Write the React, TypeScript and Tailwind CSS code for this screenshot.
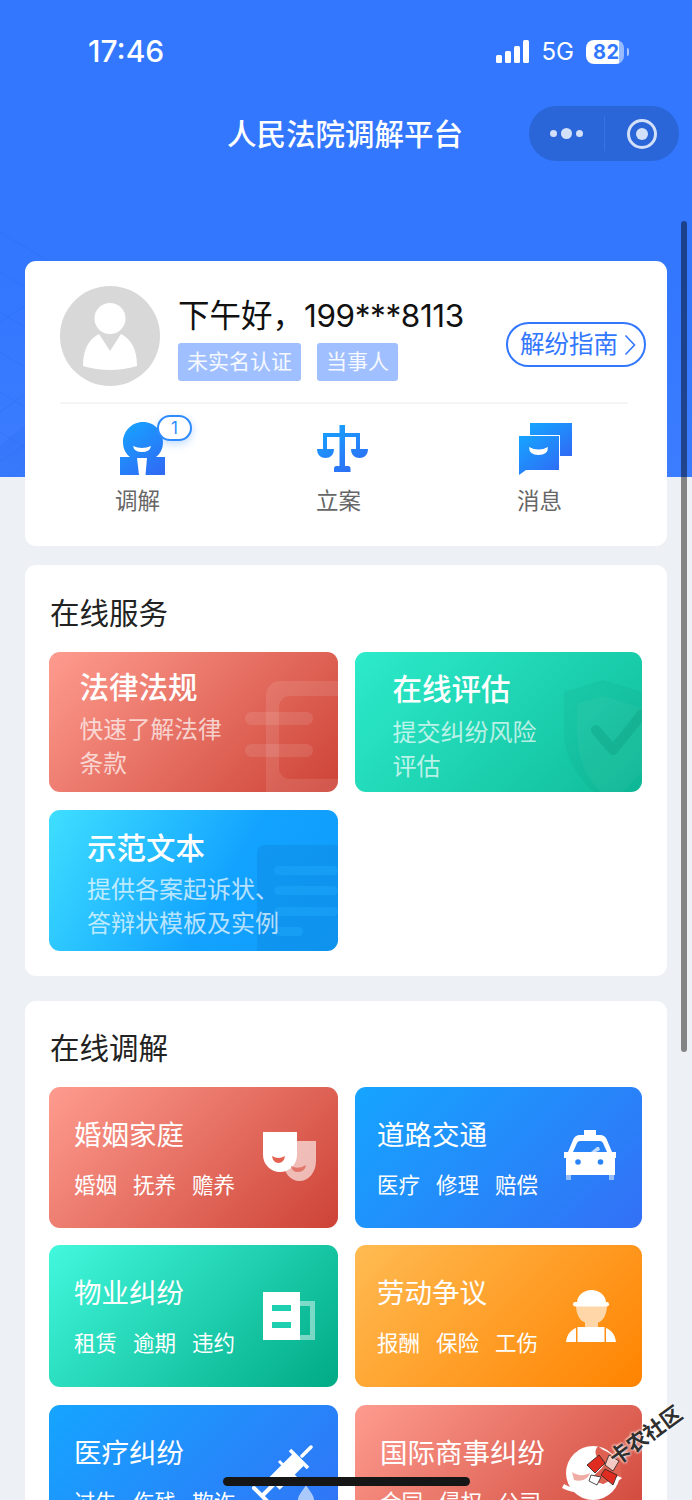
import React from 'react';

function Signal() {
  return (
    <svg width="34" height="24" viewBox="0 0 34 24" fill="#fff">
      <rect x="0" y="15" width="6" height="8" rx="1.5" />
      <rect x="9" y="11" width="6" height="12" rx="1.5" />
      <rect x="18" y="6" width="6" height="17" rx="1.5" />
      <rect x="27" y="0" width="6" height="23" rx="1.5" />
    </svg>
  );
}

function Battery() {
  return (
    <div className="relative ml-[12px] flex h-[24px] w-[43px] items-center">
      <div className="flex h-[24px] w-[43px] overflow-hidden rounded-[8px]">
        <div className="h-full w-[37px] bg-white" />
        <div className="h-full w-[6px] bg-white/50" />
      </div>
      <span className="absolute left-[7px] top-0 text-[20px] font-bold leading-[24px] tracking-[0.5px] text-[#3377ff]">82</span>
      <div className="ml-[3px] h-[8px] w-[2px] rounded-r-[2px] bg-white/60" />
    </div>
  );
}

function Capsule() {
  return (
    <div className="flex h-[55px] w-[150px] items-center justify-self-end rounded-full bg-[#2b66d9]">
      <div className="flex w-[75px] items-center justify-center gap-[4px]">
        <span className="h-[7px] w-[7px] rounded-full bg-[#d3e0fa]" />
        <span className="h-[11px] w-[11px] rounded-full bg-[#d3e0fa]" />
        <span className="h-[7px] w-[7px] rounded-full bg-[#d3e0fa]" />
      </div>
      <div className="h-[35px] w-px bg-[#3a72e0]" />
      <div className="flex flex-1 items-center justify-center">
        <div className="flex h-[30px] w-[30px] items-center justify-center rounded-full border-[3px] border-[#d3e0fa]">
          <div className="h-[12px] w-[12px] rounded-full bg-[#d3e0fa]" />
        </div>
      </div>
    </div>
  );
}

function BgPattern() {
  return (
    <svg className="absolute left-0 top-[200px]" width="60" height="277" viewBox="0 0 60 277" fill="none">
      <g stroke="#1f5fe0" strokeOpacity="0.2" strokeWidth="1">
        <path d="M0 32 L60 68 M0 72 L60 108 M0 112 L60 148 M0 152 L60 188 M0 192 L60 228 M0 232 L40 256" />
        <path d="M0 122 L40 96 M0 212 L60 170 M0 262 L60 222 M10 277 L25 262" />
      </g>
      <path d="M0 245 L25 225 L25 277 L0 277Z" fill="#1f5fe0" opacity="0.12" />
    </svg>
  );
}

function Avatar() {
  return (
    <svg width="100" height="100" viewBox="0 0 100 100" className="shrink-0">
      <circle cx="50" cy="50" r="50" fill="#d8d8d8" />
      <ellipse cx="50" cy="32.5" rx="15.5" ry="15.5" fill="#fff" />
      <path d="M39 48 L50 65 L61 48 Q77 56 77 80 Q50 88 23 80 Q23 56 39 48Z" fill="#fff" />
    </svg>
  );
}

function MediateIcon() {
  return (
    <svg width="46" height="54" viewBox="0 0 46 54">
      <defs>
        <linearGradient id="mi" x1="0.2" y1="0" x2="0.8" y2="1">
          <stop offset="0" stopColor="#17a2ff" />
          <stop offset="1" stopColor="#2f6cf5" />
        </linearGradient>
      </defs>
      <path d="M23 0 C35 0 43 10 43 20 C43 27 40 32 36 35 L45 35 L45 53 L0 53 L0 35 L10 35 C6 32 3 27 3 20 C3 10 11 0 23 0Z" fill="url(#mi)" />
      <path d="M13 24 Q22 28 31 24 Q30 30 22 30 Q14 30 13 24Z" fill="#fff" />
      <path d="M17 36 L27 36 L25.5 53 L19 53Z" fill="#fff" />
    </svg>
  );
}

function ScaleIcon() {
  return (
    <svg width="52" height="48" viewBox="0 0 52 48">
      <defs>
        <linearGradient id="si" x1="0.2" y1="0" x2="0.8" y2="1">
          <stop offset="0" stopColor="#17a2ff" />
          <stop offset="1" stopColor="#2f6cf5" />
        </linearGradient>
      </defs>
      <path
        d="M22.5 0 H28 V8 H43 V24 H51 C51 30 47 33 42.5 33 C38 33 34 30 34 24 H39 V12 H28 V41 H31 A2.5 2.5 0 0 1 33.5 43.5 V47 H17 V43.5 A2.5 2.5 0 0 1 19.5 41 H22.5 V12 H10 V24 H17 C17 30 13 33 8.5 33 C4 33 0 30 0 24 H6 V8 H22.5Z"
        fill="url(#si)"
      />
    </svg>
  );
}

function MessageIcon() {
  return (
    <svg width="54" height="52" viewBox="0 0 54 52">
      <defs>
        <linearGradient id="me" x1="0.1" y1="0" x2="0.9" y2="1">
          <stop offset="0" stopColor="#17a2ff" />
          <stop offset="1" stopColor="#2f6cf5" />
        </linearGradient>
      </defs>
      <path d="M11 0 H53 V33 H41 V12 H11Z" fill="url(#me)" />
      <path d="M0 13 H40 V47 H7 L0 52Z" fill="url(#me)" />
      <path d="M10 24 Q19.5 29 29 24 Q29 32 19.5 32 Q10 32 10 24Z" fill="#fff" />
    </svg>
  );
}

function ShortcutBadge() {
  return (
    <div className="absolute left-[37px] top-[-7px] flex h-[26px] w-[35px] items-center justify-center rounded-[13px] border-2 border-[#2e8bff] bg-white text-[17px] leading-none text-[#2e8bff] shadow-[0_3px_8px_rgba(46,139,255,0.3)]">
      1
    </div>
  );
}

function Masks() {
  return (
    <svg width="54" height="52" viewBox="0 0 54 52">
      <path d="M20 9 H53 V29 A16.5 20 0 0 1 20 29Z" fill="#fff" opacity="0.6" />
      <path d="M0 0 H34 V23 A17 17 0 0 1 0 23Z" fill="#fff" />
      <path d="M9 24 Q15.5 28 22 24 Q21 31 15.5 31 Q10 31 9 24Z" fill="#e5604f" />
      <path d="M28 34 Q35 38 43 33 Q42 40 35 40 Q29 40 28 34Z" fill="#e2766a" />
    </svg>
  );
}

function Building() {
  return (
    <svg width="53" height="49" viewBox="0 0 53 49">
      <path d="M37 9 H52 V48 H37 V43 H47 V14 H37Z" fill="#fff" opacity="0.45" />
      <path d="M0 0 H37 V48 H0Z" fill="#fff" />
      <rect x="9" y="13" width="19" height="6" fill="#1fd0b0" />
      <rect x="9" y="30" width="19" height="6" fill="#1fd0b0" />
    </svg>
  );
}

function Taxi() {
  return (
    <svg width="52" height="50" viewBox="0 0 52 50" className="mb-[6px]">
      <rect x="2" y="44" width="5" height="6" fill="#fff" opacity="0.5" />
      <rect x="45" y="44" width="5" height="6" fill="#fff" opacity="0.5" />
      <rect x="20" y="0" width="12" height="5" fill="#fff" />
      <path d="M16 5 H36 Q41 5 43 10 L48 22 H52 V28 H51 V45 H2 V28 H0 V22 H4 L9 10 Q11 5 16 5Z" fill="#fff" />
      <path d="M16 11 H36 Q38 11 39 13 L43 22 H9 L13 13 Q14 11 16 11Z" fill="#2a84f9" />
      <path d="M27 22 L33 17 L35 17 L36 20 L32 22Z" fill="#fff" opacity="0.7" />
      <circle cx="14" cy="32" r="2.8" fill="#2a84f9" />
      <circle cx="36.5" cy="32" r="2.8" fill="#2a84f9" />
    </svg>
  );
}

function Worker() {
  return (
    <svg width="50" height="52" viewBox="0 0 50 52">
      <path d="M10 15 H41 C41 26 36 34 25.5 34 C15 34 10 26 10 15Z" fill="#ffd6a8" />
      <rect x="19" y="32" width="13" height="6" fill="#ffd6a8" />
      <path d="M11 13 A14.5 13 0 0 1 40 13Z" fill="#fff" />
      <rect x="7" y="12" width="36" height="4.5" rx="2.2" fill="#fff" />
      <path d="M0 52 C1 44 5 40 10 38 V52Z M40 38 C45 40 49 44 50 52 H40Z" fill="#fff" />
      <rect x="11.5" y="37" width="27" height="15" fill="#fff" />
    </svg>
  );
}

function Syringe() {
  return (
    <svg width="66" height="60" viewBox="0 0 66 60" className="mb-[2px]">
      <g stroke="#fff" fill="none">
        <path d="M59 2 L50 11" strokeWidth="3.5" strokeLinecap="round" />
        <path d="M38 5 L56 23" strokeWidth="3.5" />
        <path d="M48 13 L22 39" strokeWidth="16" />
        <path d="M27 16 L44 33" strokeWidth="3" />
        <path d="M22 39 L10 51" strokeWidth="4" />
        <path d="M2 43 L16 57" strokeWidth="4" strokeLinecap="round" />
      </g>
      <path d="M54 40 C58 47 62 50 62 55 C62 59 59 62 54 62 C49 62 46 59 46 55 C46 50 50 47 54 40Z" fill="#fff" opacity="0.6" />
    </svg>
  );
}

function Globe() {
  return (
    <svg width="62" height="58" viewBox="0 0 62 58" className="mb-[6px]">
      <circle cx="31" cy="29" r="27" fill="#fff" />
      <path d="M36 2 C42 8 50 8 58 18 L60 36 C54 34 50 44 44 42 C40 38 34 40 30 34 C34 28 40 26 42 20 C36 14 30 10 36 2Z" fill="#df6152" />
      <path d="M10 28 C16 32 22 32 28 29 C26 36 18 38 12 36Z" fill="#e8897d" opacity="0.7" />
      <path d="M2 40 C12 46 26 46 38 42 L56 32 L60 34 C46 46 18 54 0 44Z" fill="#fff" />
    </svg>
  );
}

function WatermarkPolicy() {
  return (
    <svg className="absolute right-0 top-[29px]" width="93" height="111" viewBox="0 0 93 111" fill="#fff" fillOpacity="0.1">
      <path d="M21 111 V14 A14 14 0 0 1 35 0 H93 V15 H45 A11 11 0 0 0 34 26 V87 A11 11 0 0 0 45 98 H93 V111Z" />
      <rect x="0" y="31" width="68" height="13" rx="6.5" />
      <rect x="0" y="63" width="68" height="13" rx="6.5" />
    </svg>
  );
}

function WatermarkShield() {
  return (
    <svg className="absolute right-0 top-[28px]" width="78" height="112" viewBox="0 0 78 112" fill="none">
      <path d="M39 0 L78 12 V112 H30 C12 96 0 76 0 50 V12Z" fill="#058d74" fillOpacity="0.1" />
      <path d="M39 16 L78 28 V92 L58 112 H38 C22 100 13 76 13 52 V24Z" fill="#fff" fillOpacity="0.04" />
      <path d="M32 50 L49 70 L78 34" stroke="#058d74" strokeOpacity="0.25" strokeWidth="10" strokeLinecap="round" strokeLinejoin="round" />
    </svg>
  );
}

function WatermarkDoc() {
  return (
    <svg className="absolute right-0 top-[35px]" width="81" height="106" viewBox="0 0 81 106" fill="none">
      <path d="M8 0 H81 V106 H0 V8 A8 8 0 0 1 8 0Z" fill="#0a6fc0" fillOpacity="0.2" />
      <g fill="#24b0ff" fillOpacity="0.35">
        <rect x="17" y="21" width="64" height="9" rx="4.5" />
        <rect x="17" y="41" width="64" height="9" rx="4.5" />
        <rect x="17" y="62" width="64" height="9" rx="4.5" />
        <rect x="17" y="82" width="29" height="9" rx="4.5" />
      </g>
    </svg>
  );
}

type Dispute = {
  title: string;
  tags: string[];
  grad: string;
  pad: string;
  icon: React.ReactNode;
};

const disputes: Dispute[] = [
  { title: '婚姻家庭', tags: ['婚姻', '抚养', '赡养'], grad: 'bg-[linear-gradient(135deg,#fe9c8f,#cd4336)]', pad: 'pl-[25px] pr-[21px]', icon: <Masks /> },
  { title: '道路交通', tags: ['医疗', '修理', '赔偿'], grad: 'bg-[linear-gradient(135deg,#15a5ff,#3370f6)]', pad: 'pl-[22px] pr-[26px]', icon: <Taxi /> },
  { title: '物业纠纷', tags: ['租赁', '逾期', '违约'], grad: 'bg-[linear-gradient(135deg,#42f8dd,#00aa85)]', pad: 'pl-[25px] pr-[22px]', icon: <Building /> },
  { title: '劳动争议', tags: ['报酬', '保险', '工伤'], grad: 'bg-[linear-gradient(135deg,#ffbb52,#ff8300)]', pad: 'pl-[22px] pr-[26px]', icon: <Worker /> },
  { title: '医疗纠纷', tags: ['过失', '伤残', '欺诈'], grad: 'bg-[linear-gradient(135deg,#15a5ff,#3370f6)]', pad: 'pl-[25px] pr-[20px]', icon: <Syringe /> },
  { title: '国际商事纠纷', tags: ['合同', '侵权', '公司'], grad: 'bg-[linear-gradient(135deg,#fe9c8f,#cd4336)]', pad: 'pl-[25px] pr-[18px]', icon: <Globe /> },
];

function DisputeTile({ d }: { d: Dispute }) {
  return (
    <div className={`flex items-center justify-between overflow-hidden rounded-[11px] ${d.grad} ${d.pad} text-white`}>
      <div className="flex h-full flex-col pt-[32px]">
        <div className="whitespace-nowrap text-[27.5px] leading-[32px]">{d.title}</div>
        <div className="mt-[18.5px] flex gap-[16px] whitespace-nowrap text-[21.5px] leading-[30px] text-white">
          {d.tags.map((t) => (
            <span key={t}>{t}</span>
          ))}
        </div>
      </div>
      {d.icon}
    </div>
  );
}

function SectionTitle({ children }: { children: React.ReactNode }) {
  return <div className="mb-[24px] pl-[25px] text-[29.5px] leading-[30px] text-[#222]">{children}</div>;
}

function Guide() {
  return (
    <div className="mb-[14px] flex h-[45px] w-[140px] shrink-0 items-center rounded-full border-2 border-[#3377ff] pl-[12px] text-[24.5px] leading-none text-[#3377ff]">
      <span className="whitespace-nowrap">解纷指南</span>
      <svg width="12" height="22" viewBox="0 0 12 22" fill="none" className="ml-[6px]">
        <path d="M1.5 1.5 L10.5 11 L1.5 20.5" stroke="#3377ff" strokeWidth="1.6" />
      </svg>
    </div>
  );
}

export default function App() {
  return (
    <div className="relative h-[1500px] w-[692px] overflow-hidden bg-[#edf0f5] font-['Inter','Noto_Sans_CJK_SC',sans-serif]">
      <div className="absolute left-0 top-0 h-[477px] w-full overflow-hidden bg-[linear-gradient(180deg,#3377ff_60%,#3c7dff)]">
        <BgPattern />
      </div>

      <div className="relative px-[25px]">
        <div className="-mx-[25px] flex h-[106px] items-start pl-[88px] pr-[63px] pt-[33px] text-white">
          <span className="text-[30px] font-medium leading-[37px]">17:46</span>
          <div className="ml-auto mt-[7px] flex h-[24px] items-center">
            <Signal />
            <span className="ml-[12px] text-[24px] leading-[24px]">5G</span>
            <Battery />
          </div>
        </div>

        <div className="-mx-[25px] grid h-[55px] grid-cols-[1fr_auto_1fr] items-center pr-[13px]">
          <div />
          <div className="whitespace-nowrap pl-[11px] text-[29.5px] font-medium leading-[36px] text-white">人民法院调解平台</div>
          <Capsule />
        </div>

        <div className="mt-[100px] h-[285px] rounded-[11px] bg-white">
          <div className="ml-[35px] mr-[39px] flex h-[143px] items-start gap-[18px] border-b-2 border-[#f5f5f5] pt-[25px]">
            <Avatar />
            <div className="flex min-w-0 flex-1 flex-col">
              <div className="mt-[8px] whitespace-nowrap text-[31.5px] leading-[44px] text-[#111]">
                下午好，<span className="tracking-[-0.4px]">199***8113</span>
              </div>
              <div className="mt-[5px] flex gap-[16px] text-[21px] leading-[38px] text-white/90">
                <span className="rounded-[3px] bg-[#a0bfff] px-[9px]">未实名认证</span>
                <span className="rounded-[3px] bg-[#a0bfff] px-[9px]">当事人</span>
              </div>
            </div>
          </div>
          <div className="relative">
            <div className="absolute left-[481px] top-[-82px]">
              <Guide />
            </div>
            <div className="grid grid-cols-3 pl-[12px] pr-[27px] pt-[18px]">
              <div className="flex flex-col items-center">
                <div className="relative ml-[11px] flex h-[54px] items-end">
                  <MediateIcon />
                  <ShortcutBadge />
                </div>
                <div className="mt-[10px] text-[22.5px] leading-[30px] text-[#666]">调解</div>
              </div>
              <div className="flex flex-col items-center">
                <div className="ml-[8px] flex h-[54px] items-center">
                  <ScaleIcon />
                </div>
                <div className="mt-[10px] text-[22.5px] leading-[30px] text-[#666]">立案</div>
              </div>
              <div className="flex flex-col items-center">
                <div className="ml-[12px] flex h-[54px] items-center">
                  <MessageIcon />
                </div>
                <div className="mt-[10px] text-[22.5px] leading-[30px] text-[#666]">消息</div>
              </div>
            </div>
          </div>
        </div>

        <div className="mt-[19px] h-[411px] rounded-[11px] bg-white pt-[33px]">
          <SectionTitle>在线服务</SectionTitle>
          <div className="grid grid-cols-[289px_287px] grid-rows-[140px_141px] gap-x-[17px] gap-y-[18px] pl-[24px]">
            <div className="relative overflow-hidden rounded-[11px] bg-[linear-gradient(135deg,#fe9c8f,#cd4336)] pl-[30.5px] pt-[17px] text-white">
              <WatermarkPolicy />
              <div className="relative text-[29.5px] font-medium leading-[36px]">法律法规</div>
              <div className="relative mt-[8px] text-[23.7px] leading-[34px] text-white/70">
                快速了解法律
                <br />
                条款
              </div>
            </div>
            <div className="relative overflow-hidden rounded-[11px] bg-[linear-gradient(135deg,#2debcb,#0fbc99)] pl-[37.5px] pt-[19px] text-white">
              <WatermarkShield />
              <div className="relative text-[29.5px] font-medium leading-[36px]">在线评估</div>
              <div className="relative mt-[9px] text-[24px] leading-[34px] text-white/70">
                提交纠纷风险
                <br />
                评估
              </div>
            </div>
            <div className="relative overflow-hidden rounded-[11px] bg-[linear-gradient(120deg,#3fdfff,#12a2ff_60%,#0f9cfb)] pl-[38px] pt-[20px] text-white">
              <WatermarkDoc />
              <div className="relative text-[29.5px] font-medium leading-[36px]">示范文本</div>
              <div className="relative mt-[7px] whitespace-nowrap text-[24px] leading-[34px] text-white/70">
                提供各案起诉状、
                <br />
                答辩状模板及实例
              </div>
            </div>
          </div>
        </div>

        <div className="mt-[25px] rounded-[11px] bg-white pt-[32px]">
          <SectionTitle>在线调解</SectionTitle>
          <div className="grid grid-cols-[289px_287px] grid-rows-[141px_142px_142px] gap-x-[17px] gap-y-[17.4px] pb-[25px] pl-[24px]">
            {disputes.map((d) => (
              <DisputeTile key={d.title} d={d} />
            ))}
          </div>
        </div>
      </div>

      {/* scrollbar */}
      <div className="absolute left-[681px] top-[221px] h-[831px] w-[6px] rounded-full bg-black/45" />
      {/* home indicator */}
      <div className="absolute left-[223px] top-[1477px] h-[9px] w-[247px] rounded-full bg-[#161616]" />
      {/* forum watermark */}
      <div className="absolute left-[590px] top-[1438px]">
        <svg width="46" height="46" viewBox="0 0 46 46" className="absolute left-[-7px] top-[9px]">
          <g stroke="#222" strokeWidth="0.8">
            <path d="M4 18 L16 8 L22 16 L12 26Z" fill="#e02b20" />
            <path d="M26 8 L36 14 L30 24 L22 18Z" fill="#f5c9c3" />
            <path d="M22 22 L34 28 L30 38 L18 28Z" fill="#e02b20" />
            <path d="M8 28 L18 30 L14 38 L6 34Z" fill="#fff" />
          </g>
        </svg>
        <div className="absolute left-[14px] top-[-15px] origin-center -rotate-[36deg] whitespace-nowrap text-[21px] font-bold leading-[26px] text-[#2f2f2f] [text-shadow:0_0_3px_#fff,0_0_3px_#fff]">
          卡农社区
        </div>
      </div>
    </div>
  );
}
